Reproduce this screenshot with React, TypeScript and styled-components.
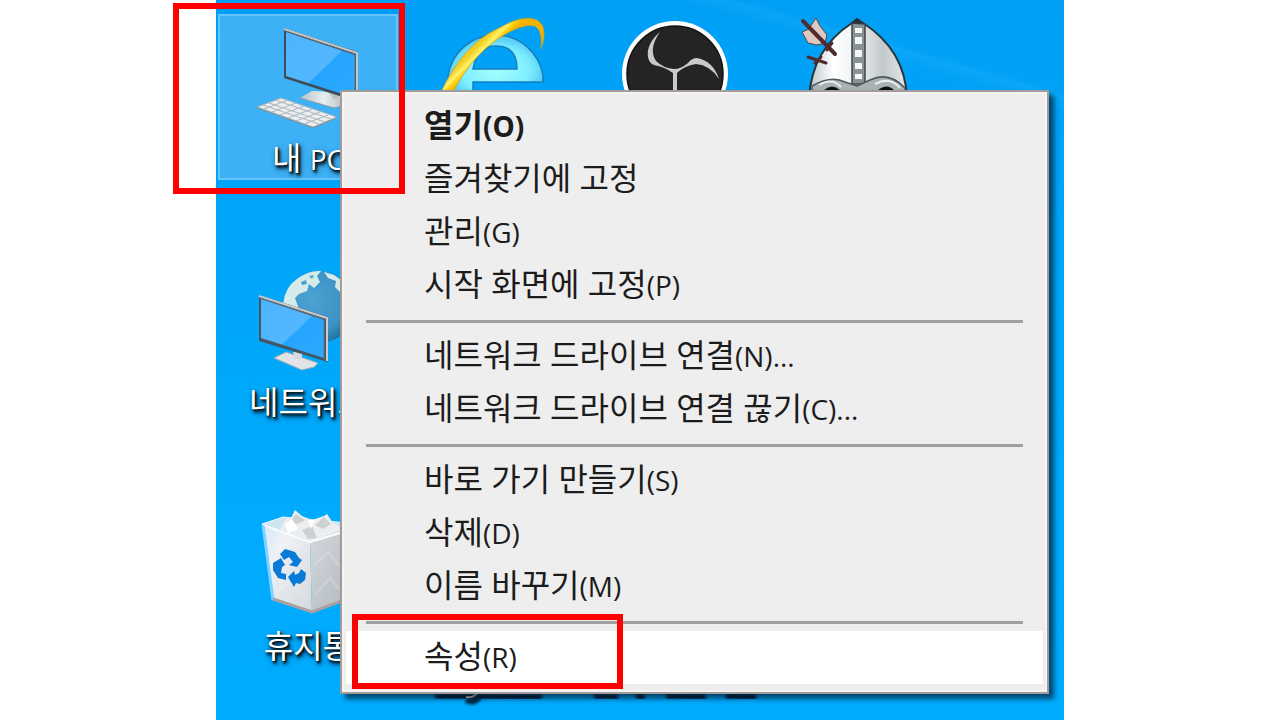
import React from 'react';
import styled, { createGlobalStyle, css } from 'styled-components';

const GlobalStyle = createGlobalStyle`
  *, *::before, *::after { box-sizing: border-box; }
  body {
    margin: 0;
    background: #fff;
    font-family: 'Open Sans', 'Noto Sans CJK KR', sans-serif;
  }
  button { font: inherit; color: inherit; border: 0; padding: 0; background: none; cursor: default; }
`;

const Page = styled.main`
  min-height: 100vh;
  padding: 0 216px;
  display: flex;
  overflow: hidden;
`;

const Desktop = styled.section`
  position: relative;
  flex: 1;
  min-width: 0;
  padding: 14px 0 0 2px;
  background:
    linear-gradient(196deg, transparent 88px, rgba(60, 190, 255, 0.18) 93px, transparent 108px),
    linear-gradient(to bottom, #009ff5 0, #00a5f9 200px, #00aafd 500px, #00acff 100%);
`;

const IconGrid = styled.div`
  display: grid;
  grid-template-columns: repeat(4, 180px);
  grid-auto-rows: 166px;
  gap: 78px 3px;
`;

const Tile = styled.button<{ $selected?: boolean; $newRow?: boolean }>`
  display: flex;
  flex-direction: column;
  align-items: center;
  border: 2px solid transparent;
  ${p => p.$newRow && css`grid-column-start: 1;`}
  ${p => p.$selected && css`
    background: #3cb1f6;
    border-color: #66c4fa;
  `}
`;

const Art = styled.svg`
  display: block;
  flex: none;
  overflow: visible;
`;

const TileLabel = styled.span`
  height: 40px;
  line-height: 40px;
  font-size: 32px;
  color: #fff;
  white-space: nowrap;
  text-shadow: 1px 1px 2px #000, 2px 3px 3px #001a30, 2px 3px 6px rgba(0, 0, 0, 0.6);
`;

const Latin = styled.span`
  font-size: 28px;
`;

const Menu = styled.ul`
  position: absolute;
  top: 90px;
  left: 124px;
  right: 15px;
  margin: 0;
  padding: 8px 4px;
  list-style: none;
  background: #eee;
  border: 2px solid #a09c9b;
  box-shadow: inset 0 0 0 2px #f6f3f2, 5px 5px 5px rgba(0, 20, 40, 0.65);
`;

const MenuRow = styled.li`
  position: relative;
`;

const MenuButton = styled.button<{ $strong?: boolean; $active?: boolean }>`
  display: block;
  width: 100%;
  height: 53px;
  padding: 0 0 4px 78px;
  line-height: 49px;
  font-size: 32px;
  font-weight: ${p => (p.$strong ? 700 : 400)};
  text-align: left;
  white-space: nowrap;
  color: #1c1c1c;
  background: ${p => (p.$active ? '#fff' : 'transparent')};
`;

const Divider = styled.li`
  height: 18px;
  padding: 8px 20px 0;
  &::before {
    content: '';
    display: block;
    height: 3px;
    background: #a0a0a0;
  }
`;

const Highlight = styled.div<{ $x: number; $y: number; $w: number; $h: number }>`
  position: absolute;
  left: ${p => p.$x}px;
  top: ${p => p.$y}px;
  width: ${p => p.$w}px;
  height: ${p => p.$h}px;
  border: 6px solid #fe0000;
  pointer-events: none;
`;

const ComputerArt = () => (
  <Art width="176" height="122" viewBox="220 16 176 122" aria-hidden="true">
    <defs>
      <linearGradient id="screen" x1="0" y1="0" x2="1" y2="1">
        <stop offset="0" stopColor="#4db4ff" />
        <stop offset=".54" stopColor="#52b7ff" />
        <stop offset=".56" stopColor="#26a5ff" />
        <stop offset="1" stopColor="#2daaff" />
      </linearGradient>
      <linearGradient id="metal" x1="0" y1="0" x2="1" y2="0">
        <stop offset="0" stopColor="#b9c1c7" />
        <stop offset=".5" stopColor="#e8edf0" />
        <stop offset="1" stopColor="#aeb7bd" />
      </linearGradient>
    </defs>
    <path d="M300 98 L312 91 Q326 90 348 98 L346 105 L334 108 Z" fill="url(#metal)" />
    <path d="M300 98 L334 108 L346 105" fill="none" stroke="#8d9aa4" />
    <path d="M329 92 h9 v7 h-5z" fill="#b9c1c7" />
    <path d="M284 28 L358 52 V102 L284 78 Z" fill="#3f4c57" />
    <path d="M286 32 L355 55 V98 L286 76 Z" fill="url(#screen)" />
    <path d="M284 29 L357 53 V100" fill="none" stroke="#c4c9cc" strokeWidth="2" />
    <path d="M285 31 L355 54 V100" fill="none" stroke="#65717a" strokeWidth="1" />
    <path d="M257 107 L281 98 L337 117 L313 127 Z" fill="#eceef0" stroke="#a3b0b9" />
    <path d="M263 105 L319 124 M269 103 L325 122 M275 100 L331 119 M264 109 L288 100 M272 112 L296 103 M280 115 L304 106 M288 118 L312 109 M296 121 L320 112 M304 124 L328 115" stroke="#b1bac1" strokeWidth="1.2" />
    <path d="M257 108 L313 128 L337 118" fill="none" stroke="#81929e" />
  </Art>
);

const NetworkArt = () => (
  <Art width="176" height="122" viewBox="220 260 176 122" aria-hidden="true">
    <defs>
      <radialGradient id="globe" cx=".4" cy=".4" r=".65">
        <stop offset="0" stopColor="#4ca3d2" />
        <stop offset=".7" stopColor="#3c93c4" />
        <stop offset="1" stopColor="#236f9e" />
      </radialGradient>
    </defs>
    <circle cx="319" cy="307" r="36" fill="url(#globe)" />
    <path d="M283 304 Q285 287 297 279 Q309 270 321 271 L317 276 L320 282 L314 288 L309 284 L307 291 L299 294 L295 298 L297 304 L291 307 L289 311 L284 312 Z" fill="#d6eceb" />
    <path d="M324 272 L334 275 L341 280 V293 L335 287 L336 281 L328 278 Z M290 300 l6 2 3 6 -7 2z" fill="#d6eceb" />
    <path d="M301 282 l5 -2 1 4 -5 1z M309 276 l5 -1 -2 4z" fill="#4aa0ce" />
    <path d="M274 358 L286 352 L318 363 L314 367 L302 370 Z" fill="#e2e4e8" stroke="#9fabb5" />
    <path d="M293 352 h9 v7 h-7z" fill="#d5d9dd" />
    <path d="M259 295 L328 317 V362 L259 341 Z" fill="#455663" />
    <path d="M261 299 L324 320 V358 L261 338 Z" fill="url(#screen)" />
    <path d="M259 296 L327 318 V361" fill="none" stroke="#c9cdd0" strokeWidth="2" />
    <path d="M260 298 L324 319 V360" fill="none" stroke="#65747f" />
  </Art>
);

const BinArt = () => (
  <Art width="176" height="122" viewBox="220 504 176 122" aria-hidden="true">
    <defs>
      <linearGradient id="binSide" x1="0" y1="0" x2="1" y2="1">
        <stop offset="0" stopColor="#d5d9dd" />
        <stop offset="1" stopColor="#aeb6bd" />
      </linearGradient>
      <linearGradient id="binFront" x1="0" y1="0" x2="1" y2="1">
        <stop offset="0" stopColor="#d2ebf8" />
        <stop offset=".3" stopColor="#eff1f4" />
        <stop offset="1" stopColor="#d4d7dc" />
      </linearGradient>
    </defs>
    <path d="M262 524 L283 517 L348 523 L356 530 L310 543 Z" fill="#cfe5f2" stroke="#e6f6ff" />
    <path d="M280 530 L286 519 L291 518 L295 510 L302 516 L312 520 L324 516 L327 514 L333 523 L343 529 L312 541 Z" fill="#eceef0" />
    <path d="M290 522 L296 514 L305 520 L298 524 Z M315 525 L324 517 L331 524 L323 529 Z M302 530 L312 526 L317 538 L308 539 Z" fill="#cdd0d3" />
    <path d="M285 524 L292 519 L298 529 L288 533 Z M308 520 L315 520 L311 529 Z" fill="#fff" />
    <path d="M263 525 L310 542 L312 613 L273 600 Z" fill="url(#binFront)" />
    <path d="M310 542 L354 529 L347 600 L312 613 Z" fill="url(#binSide)" />
    <path d="M263 525 L310 542 L354 529" fill="none" stroke="#f8fcff" strokeWidth="2" />
    <path d="M263 525 L273 600" stroke="#7fd2ff" strokeWidth="3" />
    <path d="M273 599 L312 612 L347 599" fill="none" stroke="#a8a19f" strokeWidth="3" />
    <path d="M275 550 L290 542 L307 551 M278 590 L291 583 L307 600 M314 565 L328 552 L343 570 M315 595 L330 578 L340 590" fill="none" stroke="#fff" strokeOpacity=".2" strokeWidth="2" />
    <path d="M280 554 L285 549 L295 552 L299 558 L302 560 L297 567 L289 565 L293 562 L289 557 L284 560 Z" fill="#087ad8" />
    <path d="M273 563 L281 558 L285 565 L282 567 L281 573 L286 574 V580 L278 578 L273 570 Z" fill="#087ad8" />
    <path d="M288 577 L294 571 L295 575 L299 573 L301 569 L306 573 L305 580 L300 584 L296 583 L294 587 Z" fill="#087ad8" />
  </Art>
);

const BrowserArt = () => (
  <Art width="176" height="122" viewBox="403 16 176 122" aria-hidden="true">
    <defs>
      <radialGradient id="ieBody" cx=".5" cy=".55" r=".55">
        <stop offset="0" stopColor="#a4ffff" />
        <stop offset=".65" stopColor="#7eeeff" />
        <stop offset="1" stopColor="#4cc4f4" />
      </radialGradient>
      <linearGradient id="ieRing" gradientUnits="userSpaceOnUse" x1="474" y1="50" x2="484" y2="60">
        <stop offset="0" stopColor="#f2cf22" />
        <stop offset=".4" stopColor="#fff26a" />
        <stop offset=".7" stopColor="#ffcb05" />
        <stop offset="1" stopColor="#f2b200" />
      </linearGradient>
    </defs>
    <path d="M448 76 A48 48 0 0 1 543 76 V82 H473 V100 H453 Q448 90 448 76 Z M473 69 H517 Q517 46 496 46 Q477 46 473 69 Z" fillRule="evenodd" fill="url(#ieBody)" stroke="#167fbe" strokeWidth="1.5" />
    <path d="M441 92 Q463 45 497 29 Q523 14 537 20 Q549 27 541 49 Q543 31 535 26 Q522 23 499 38 Q471 57 453 92 Z" fill="url(#ieRing)" stroke="#c9a022" strokeWidth=".7" />
  </Art>
);

const RecorderArt = () => (
  <Art width="176" height="122" viewBox="586 16 176 122" aria-hidden="true">
    <circle cx="675" cy="74" r="53" fill="#fff" />
    <circle cx="675" cy="74" r="48" fill="#252326" stroke="#111" strokeWidth="1.5" />
    <path d="M660 32 Q646 44 648 57 Q649 63 654 65 Q665 67 673 73 V100 H677 V73 Q684 66 696 64 Q710 65 719 79 Q713 61 697 58 Q692 58 688 63 Q681 69 674 69 Q663 68 656 61 Q648 49 660 32 Z" fill="#cacacc" />
  </Art>
);

const HelmetArt = () => (
  <Art width="176" height="122" viewBox="769 16 176 122" aria-hidden="true">
    <defs>
      <linearGradient id="steel" x1="0" y1="0" x2="1" y2="0">
        <stop offset="0" stopColor="#bcc7c9" />
        <stop offset=".25" stopColor="#fff" />
        <stop offset=".5" stopColor="#eef1f1" />
        <stop offset=".75" stopColor="#c3c9cb" />
        <stop offset="1" stopColor="#e4e8e8" />
      </linearGradient>
    </defs>
    <path d="M809 98 Q812 49 852 23 L857 19 L863 23 Q905 50 907 98 Z" fill="url(#steel)" stroke="#28343c" strokeWidth="2" />
    <path d="M852 23 V84 H865 V24 Z" fill="#899295" stroke="#3f474b" strokeWidth="1.5" />
    <path d="M855 28 h7 v5 h-7z M855 37 h7 v7 h-7z M855 50 h7 v7 h-7z M855 63 h7 v6 h-7z M855 74 h7 v5 h-7z" fill="#f4f6f6" />
    <path d="M851 23 L857 18 L864 24 Z" fill="#29333a" />
    <path d="M812 86 Q831 75 845 82 L857 86 L870 80 Q889 71 905 88 V98 H812 Z" fill="#a8b2b5" stroke="#4d585d" strokeWidth="1.5" />
    <path d="M819 85 Q832 77 841 87 M875 84 Q890 76 900 88" fill="none" stroke="#eceeee" strokeWidth="2" />
    <path d="M824 90 Q832 83 840 90 Z M878 90 Q887 83 894 90 Z" fill="#0c1011" />
    <path d="M802 32 L809 29 L812 24 L816 18 L820 26 L827 35 L825 43 L817 45 L808 43 Z" fill="#dccac2" stroke="#5a4240" />
    <path d="M803 21 L835 54" stroke="#512b2d" strokeWidth="4" strokeLinecap="round" />
    <path d="M827 50 L832 43 M808 57 L826 63 M815 63 L821 57" stroke="#512b2d" strokeWidth="3" strokeLinecap="round" />
  </Art>
);

const LabelEdges = () => (
  <Art width="360" height="204" viewBox="403 504 360 204" aria-hidden="true">
    <defs>
      <filter id="soft" x="-10%" y="-200%" width="120%" height="500%"><feGaussianBlur stdDeviation="1.5" /></filter>
    </defs>
    <path d="M437 698 L544 699 M596 698 L620 699 M638 698 L647 699 M668 698 L708 699 M728 698 L758 699" stroke="#001f38" strokeWidth="6" filter="url(#soft)" />
    <path d="M468 702 Q477 706 482 698" fill="none" stroke="#00263e" strokeWidth="6" filter="url(#soft)" />
    <path d="M468 699 Q476 700 480 694" fill="none" stroke="#f2dfca" strokeWidth="2" />
  </Art>
);

type Item = { text: string; key?: string; strong?: boolean; active?: boolean };

const groups: Item[][] = [
  [
    { text: '열기', key: '(O)', strong: true },
    { text: '즐겨찾기에 고정' },
    { text: '관리', key: '(G)' },
    { text: '시작 화면에 고정', key: '(P)' },
  ],
  [
    { text: '네트워크 드라이브 연결', key: '(N)...' },
    { text: '네트워크 드라이브 연결 끊기', key: '(C)...' },
  ],
  [
    { text: '바로 가기 만들기', key: '(S)' },
    { text: '삭제', key: '(D)' },
    { text: '이름 바꾸기', key: '(M)' },
  ],
  [{ text: '속성', key: '(R)', active: true }],
];

export default function App() {
  return (
    <>
      <GlobalStyle />
      <Page>
        <Desktop>
          <IconGrid>
            <Tile $selected>
              <ComputerArt />
              <TileLabel>내 <Latin>PC</Latin></TileLabel>
            </Tile>
            <Tile aria-label="Internet Explorer"><BrowserArt /></Tile>
            <Tile aria-label="OBS Studio"><RecorderArt /></Tile>
            <Tile aria-label="Helmet"><HelmetArt /></Tile>
            <Tile $newRow>
              <NetworkArt />
              <TileLabel>네트워크</TileLabel>
            </Tile>
            <Tile $newRow>
              <BinArt />
              <TileLabel>휴지통</TileLabel>
            </Tile>
            <LabelEdges />
          </IconGrid>

          <Menu role="menu">
            {groups.map((items, g) => (
              <React.Fragment key={g}>
                {g > 0 && <Divider role="separator" />}
                {items.map(item => (
                  <MenuRow key={item.text} role="none">
                    <MenuButton role="menuitem" $strong={item.strong} $active={item.active}>
                      {item.text}
                      {item.key && <Latin>{item.key}</Latin>}
                    </MenuButton>
                    {item.active && <Highlight $x={6} $y={-17} $w={271} $h={75} />}
                  </MenuRow>
                ))}
              </React.Fragment>
            ))}
          </Menu>
          <Highlight $x={-43} $y={3} $w={232} $h={191} />
        </Desktop>
      </Page>
    </>
  );
}
